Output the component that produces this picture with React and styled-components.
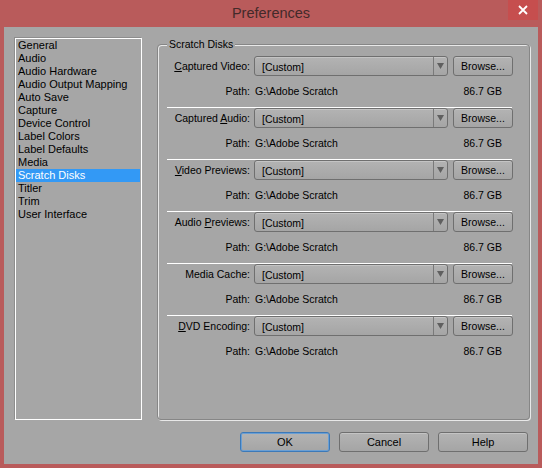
import React from 'react';
import styled, { createGlobalStyle } from 'styled-components';

const GlobalStyle = createGlobalStyle`
  html, body {
    margin: 0;
    padding: 0;
    background: #b95b5b;
  }
  * {
    box-sizing: border-box;
  }
`;

const FONT = `'Liberation Sans', Arial, sans-serif`;

// Window frame
const Window = styled.div`
  width: 542px;
  height: 468px;
  background: #b95b5b;
  display: flex;
  flex-direction: column;
  padding: 0 4px 4px 4px;
  font-family: ${FONT};
  font-size: 10.5px;
  color: #000;
`;

const TitleBar = styled.div`
  height: 27px;
  display: grid;
  grid-template-columns: 1fr auto 1fr;
  align-items: start;
`;

const Title = styled.div`
  grid-column: 2;
  font-size: 14.5px;
  color: #432a2a;
  line-height: 27px;
`;

const CloseButton = styled.div`
  grid-column: 3;
  justify-self: end;
  width: 30px;
  height: 20px;
  background: #c64e4e;
  color: #fff;
  display: flex;
  align-items: center;
  justify-content: center;
`;

const Body = styled.div`
  flex: 1;
  background: #a6a6a6;
  padding: 11px 8px 12px 11px;
  display: grid;
  grid-template-columns: 127px 1fr;
  grid-template-rows: 1fr auto;
  column-gap: 15px;
`;

// Category list
const CategoryList = styled.div`
  border: 1px solid #fff;
  box-shadow: -1px -1px 0 #8d8d8d;
  display: flex;
  flex-direction: column;
`;

const CategoryItem = styled.div`
  height: 13px;
  line-height: 13px;
  font-size: 11px;
  padding-left: 2px;
  margin-right: 1px;
  white-space: nowrap;
  background: ${(p) => (p.$selected ? '#3399f5' : 'transparent')};
  color: ${(p) => (p.$selected ? '#fff' : '#000')};
`;

// Group box
const GroupBox = styled.div`
  position: relative;
  margin-top: 6px;
  border: 1px solid #868686;
  border-radius: 4px;
  box-shadow: 1px 1px 0 #e8e8e8, inset 1px 1px 0 #e8e8e8;
  padding-top: 11px;
`;

const GroupTitle = styled.div`
  position: absolute;
  top: -7px;
  left: 9px;
  padding: 0 2px;
  background: #a6a6a6;
  line-height: 13px;
`;

const DiskSection = styled.div`
  padding-bottom: ${(p) => (p.$last ? 0 : 4)}px;
  margin-bottom: ${(p) => (p.$last ? 0 : 5)}px;
`;

const Separator = styled.div`
  height: 1px;
  background: #fff;
  margin-left: 9px;
  width: 345px;
`;

const Row = styled.div`
  display: grid;
  grid-template-columns: 92px 198px 65px;
  align-items: center;
  height: ${(p) => p.$h}px;
  margin-top: ${(p) => p.$mt || 0}px;
`;

const FieldLabel = styled.div`
  text-align: right;
  white-space: nowrap;
`;

const Dropdown = styled.div`
  margin-left: 4px;
  height: 20px;
  border: 1px solid #6f6f6f;
  border-radius: 3px;
  background: linear-gradient(#b3b3b3, #a5a5a5);
  box-shadow: inset 0 1px 0 #c4c4c4;
  display: flex;
  align-items: stretch;
`;

const DropdownText = styled.div`
  flex: 1;
  padding-left: 7px;
  display: flex;
  align-items: center;
  padding-top: 1px;
`;

const DropdownArrow = styled.div`
  width: 14px;
  border-left: 1px solid #7a7a7a;
  display: flex;
  align-items: center;
  justify-content: center;
`;

const PushButton = styled.div`
  height: 20px;
  width: ${(p) => p.$w}px;
  margin-left: ${(p) => p.$ml || 0}px;
  border: 1px solid ${(p) => (p.$default ? '#3c79b8' : '#6f6f6f')};
  border-radius: 3px;
  background: linear-gradient(#b3b3b3, #a5a5a5);
  box-shadow: ${(p) =>
    p.$default ? 'inset 0 0 0 1px #6a9fd4' : 'inset 0 1px 0 #c4c4c4'};
  display: flex;
  align-items: center;
  justify-content: center;
  font-size: ${(p) => p.$fs || 10.5}px;
`;

const PathValue = styled.div`
  padding-left: 5px;
  white-space: nowrap;
`;

const SizeValue = styled.div`
  text-align: right;
  padding-right: 11px;
  white-space: nowrap;
`;

const ButtonBar = styled.div`
  grid-column: 1 / span 2;
  display: flex;
  justify-content: flex-end;
  gap: 9px;
  margin-top: 12px;
  padding-right: 2px;
`;

const categories = [
  'General',
  'Audio',
  'Audio Hardware',
  'Audio Output Mapping',
  'Auto Save',
  'Capture',
  'Device Control',
  'Label Colors',
  'Label Defaults',
  'Media',
  'Scratch Disks',
  'Titler',
  'Trim',
  'User Interface',
];

const disks = [
  { label: <><u>C</u>aptured Video:</> },
  { label: <>Captured <u>A</u>udio:</> },
  { label: <><u>V</u>ideo Previews:</> },
  { label: <>Audio <u>P</u>reviews:</> },
  { label: <>Media Cache:</> },
  { label: <><u>D</u>VD Encoding:</> },
];

const App = () => {
  return (
    <Window>
      <GlobalStyle />
      <TitleBar>
        <Title>Preferences</Title>
        <CloseButton>
          <svg width="10" height="10" viewBox="0 0 10 10">
            <path d="M1 1 L9 9 M9 1 L1 9" stroke="#fff" strokeWidth="1.8" />
          </svg>
        </CloseButton>
      </TitleBar>

      <Body>
        <CategoryList>
          {categories.map((c) => (
            <CategoryItem key={c} $selected={c === 'Scratch Disks'}>
              {c}
            </CategoryItem>
          ))}
        </CategoryList>

        <GroupBox>
          <GroupTitle>Scratch Disks</GroupTitle>
          {disks.map((d, i) => {
            const last = i === disks.length - 1;
            return (
              <React.Fragment key={i}>
                <DiskSection $last={last}>
                  <Row $h={20}>
                    <FieldLabel>{d.label}</FieldLabel>
                    <Dropdown>
                      <DropdownText>[Custom]</DropdownText>
                      <DropdownArrow>
                        <svg width="7" height="6" viewBox="0 0 7 6">
                          <path d="M0 0 H7 L3.5 6 Z" fill="#5f5f5f" />
                        </svg>
                      </DropdownArrow>
                    </Dropdown>
                    <PushButton $w={60} $ml={5}>Browse...</PushButton>
                  </Row>
                  <Row $h={14} $mt={8}>
                    <FieldLabel>Path:</FieldLabel>
                    <PathValue>G:\Adobe Scratch</PathValue>
                    <SizeValue>86.7 GB</SizeValue>
                  </Row>
                </DiskSection>
                {!last && <Separator />}
              </React.Fragment>
            );
          })}
        </GroupBox>

        <ButtonBar>
          <PushButton $w={90} $fs={11} $default>OK</PushButton>
          <PushButton $w={90} $fs={11}>Cancel</PushButton>
          <PushButton $w={90} $fs={11}>Help</PushButton>
        </ButtonBar>
      </Body>
    </Window>
  );
};

export default App;
